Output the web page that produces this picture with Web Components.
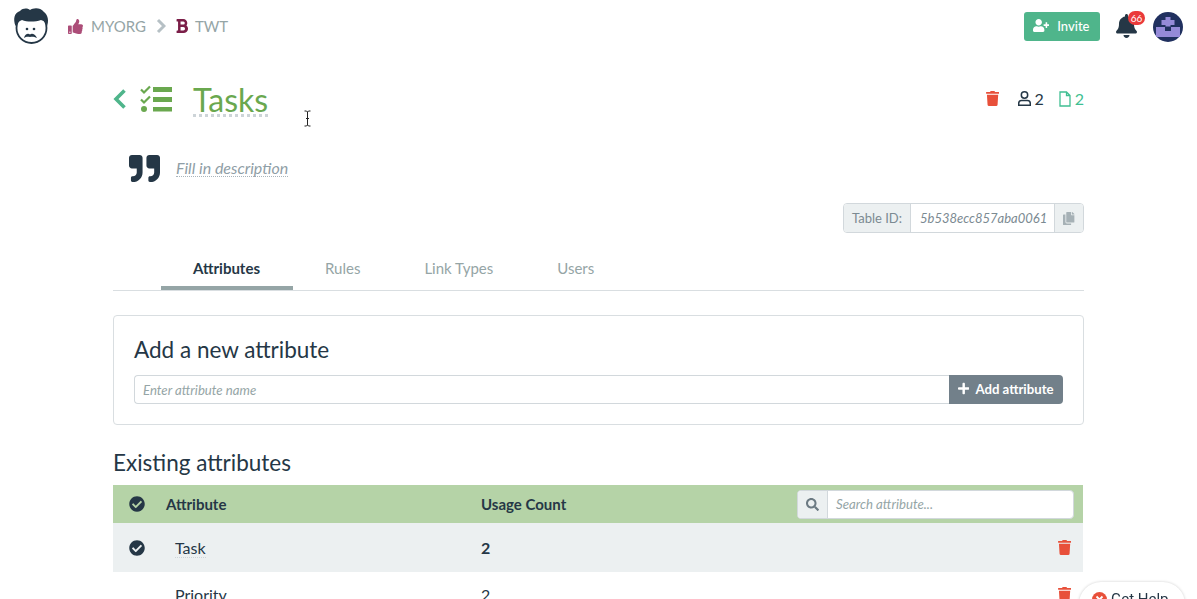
<!DOCTYPE html>
<html>
<head>
<meta charset="utf-8">
<title>Tasks</title>
<style>
    html, body {
        margin: 0;
        height: 599px;
        overflow: hidden;
        background: #fff;
        font-family: Lato, "Liberation Sans", sans-serif;
        color: #253746;
    }
</style>
</head>
<body>
<app-topbar></app-topbar>
<table-page></table-page>
<help-bubble></help-bubble>
<text-cursor></text-cursor>

<script>
const ICONS = {
    trash: ['0 0 448 512', 'M432 32H312l-9.4-18.7A24 24 0 0 0 281.1 0H166.8a23.72 23.72 0 0 0-21.4 13.3L136 32H16A16 16 0 0 0 0 48v32a16 16 0 0 0 16 16h416a16 16 0 0 0 16-16V48a16 16 0 0 0-16-16zM53.2 467a48 48 0 0 0 47.9 45h245.8a48 48 0 0 0 47.9-45L416 128H32z'],
    check: ['0 0 512 512', 'M504 256c0 136.967-111.033 248-248 248S8 392.967 8 256 119.033 8 256 8s248 111.033 248 248zM227.314 387.314l184-184c6.248-6.248 6.248-16.379 0-22.627l-22.627-22.627c-6.248-6.249-16.379-6.249-22.628 0L216 308.118l-70.059-70.059c-6.248-6.248-16.379-6.248-22.628 0l-22.627 22.627c-6.248 6.248-6.248 16.379 0 22.627l104 104c6.249 6.249 16.379 6.249 22.628.001z'],
    search: ['0 0 512 512', 'M505 442.7L405.3 343c-4.5-4.5-10.6-7-17-7H372c27.6-35.3 44-79.7 44-128C416 93.1 322.9 0 208 0S0 93.1 0 208s93.1 208 208 208c48.3 0 92.7-16.4 128-44v16.3c0 6.4 2.5 12.5 7 17l99.7 99.7c9.4 9.4 24.6 9.4 33.9 0l28.3-28.3c9.4-9.4 9.4-24.6.1-34zM208 336c-70.7 0-128-57.2-128-128 0-70.7 57.2-128 128-128 70.7 0 128 57.2 128 128 0 70.7-57.2 128-128 128z'],
    bell: ['0 0 448 512', 'M224 512c35.32 0 63.97-28.65 63.97-64H160.03c0 35.35 28.65 64 63.97 64zm215.39-149.71c-19.32-20.76-55.47-51.99-55.47-154.29 0-77.7-54.48-139.9-127.94-155.16V32c0-17.67-14.32-32-31.98-32s-31.98 14.33-31.98 32v20.84C118.56 68.1 64.08 130.3 64.08 208c0 102.3-36.15 133.53-55.47 154.29-6 6.45-8.66 14.16-8.61 21.71.11 16.4 12.98 32 32.1 32h383.8c19.12 0 32-15.6 32.1-32 .05-7.55-2.61-15.27-8.61-21.71z'],
    quote: ['0 0 512 512', 'M464 32H336c-26.5 0-48 21.5-48 48v128c0 26.5 21.5 48 48 48h80v64c0 35.3-28.7 64-64 64h-8c-13.3 0-24 10.7-24 24v48c0 13.3 10.7 24 24 24h8c88.4 0 160-71.6 160-160V80c0-26.5-21.5-48-48-48zm-288 0H48C21.5 32 0 53.5 0 80v128c0 26.5 21.5 48 48 48h80v64c0 35.3-28.7 64-64 64h-8c-13.3 0-24 10.7-24 24v48c0 13.3 10.7 24 24 24h8c88.4 0 160-71.6 160-160V80c0-26.5-21.5-48-48-48z'],
    thumb: ['0 0 512 512', 'M104 224H24c-13.255 0-24 10.745-24 24v240c0 13.255 10.745 24 24 24h80c13.255 0 24-10.745 24-24V248c0-13.255-10.745-24-24-24zM64 472c-13.255 0-24-10.745-24-24s10.745-24 24-24 24 10.745 24 24-10.745 24-24 24zM384 81.452c0 42.416-25.97 66.208-33.277 94.548h101.723c33.397 0 59.397 27.746 59.553 58.098.084 17.938-7.546 37.249-19.439 49.197l-.11.11c9.836 23.337 8.237 56.037-9.308 79.469 8.681 25.895-.069 57.704-16.382 74.757 4.298 17.598 2.244 32.575-6.148 44.632C440.202 511.587 389.616 512 346.839 512l-2.845-.001c-48.287-.017-87.806-17.598-119.56-31.725-15.957-7.099-36.821-15.887-52.651-16.178-6.54-.12-11.783-5.457-11.783-11.998v-213.77c0-3.2 1.282-6.271 3.558-8.521 39.614-39.144 56.648-80.587 89.117-113.111 14.804-14.832 20.188-37.236 25.393-58.902C282.515 39.293 291.817 0 312 0c24 0 72 8 72 81.452z'],
    plus: ['0 0 448 512', 'M416 208H272V64c0-17.67-14.33-32-32-32h-32c-17.67 0-32 14.33-32 32v144H32c-17.67 0-32 14.33-32 32v32c0 17.67 14.33 32 32 32h144v144c0 17.67 14.33 32 32 32h32c17.67 0 32-14.33 32-32V304h144c17.67 0 32-14.33 32-32v-32c0-17.67-14.33-32-32-32z'],
    userplus: ['0 0 640 512', 'M624 208h-64v-64c0-8.8-7.2-16-16-16h-32c-8.8 0-16 7.2-16 16v64h-64c-8.8 0-16 7.2-16 16v32c0 8.8 7.2 16 16 16h64v64c0 8.8 7.2 16 16 16h32c8.8 0 16-7.2 16-16v-64h64c8.8 0 16-7.2 16-16v-32c0-8.8-7.2-16-16-16zm-400 48c70.7 0 128-57.3 128-128S294.7 0 224 0 96 57.3 96 128s57.3 128 128 128zm89.6 32h-16.7c-22.2 10.2-46.9 16-72.9 16s-50.6-5.8-72.9-16h-16.7C60.2 288 0 348.2 0 422.4V464c0 26.5 21.5 48 48 48h352c26.5 0 48-21.5 48-48v-41.6c0-74.2-60.2-134.4-134.4-134.4z'],
    copy: ['0 0 448 512', 'M320 448v40c0 13.255-10.745 24-24 24H24c-13.255 0-24-10.745-24-24V120c0-13.255 10.745-24 24-24h72v296c0 30.879 25.121 56 56 56h168zm0-344V0H152c-13.255 0-24 10.745-24 24v368c0 13.255 10.745 24 24 24h272c13.255 0 24-10.745 24-24V128H344c-13.2 0-24-10.8-24-24zm120.971-31.029L375.029 7.029A24 24 0 0 0 358.059 0H352v96h96v-6.059a24 24 0 0 0-7.029-16.97z'],
    bold: ['0 0 384 512', 'M333.49 238a122 122 0 0 0 27-65.21C367.87 96.49 308 32 233.42 32H34a16 16 0 0 0-16 16v48a16 16 0 0 0 16 16h31.87v288H34a16 16 0 0 0-16 16v48a16 16 0 0 0 16 16h209.32c70.8 0 134.14-51.75 141-122.4 4.74-48.45-16.39-92.06-50.83-119.6zM145.66 112h87.76a48 48 0 0 1 0 96h-87.76zm87.76 288h-87.76V288h87.76a56 56 0 0 1 0 112z']
};

// small helper so every shadow root can use the same icon set
function icon(name, height, color) {
    const [box, d] = ICONS[name];
    const parts = box.split(' ');
    const width = height * parts[2] / parts[3];
    return `<svg viewBox="${box}" width="${width}" height="${height}" fill="${color}" style="display:block;flex:none"><path d="${d}"/></svg>`;
}

class AppTopbar extends HTMLElement {
    constructor() {
        super();
        this.attachShadow({mode: 'open'});
        this.shadowRoot.innerHTML = `
            <style>
                :host {
                    display: flex;
                    align-items: center;
                    height: 52px;
                    padding: 0 14px 0 13px;
                    box-sizing: border-box;
                }
                .crumbs {
                    display: flex;
                    align-items: center;
                    margin-left: 19px;
                    font-size: 15px;
                    color: #95a5a6;
                }
                .crumbs svg { margin-right: 8px; }
                .right {
                    margin-left: auto;
                    display: flex;
                    align-items: center;
                }
                .invite {
                    display: flex;
                    align-items: center;
                    gap: 8px;
                    height: 29px;
                    width: 76px;
                    box-sizing: border-box;
                    padding: 0 0 2px 9px;
                    margin-top: 1px;
                    background: #4fb58b;
                    color: #fff;
                    border-radius: 3px;
                    font-size: 13px;
                    font-weight: 500;
                }
                .bell {
                    position: relative;
                    margin: 0 16px;
                }
                .badge {
                    position: absolute;
                    top: -3px;
                    left: 12px;
                    width: 17px;
                    height: 14px;
                    border-radius: 7px;
                    background: #ea3a3a;
                    color: #fff;
                    font-size: 10px;
                    line-height: 14px;
                    text-align: center;
                }
            </style>
            <svg width="36" height="38" viewBox="0 0 36 38" style="flex:none">
                <circle cx="18.500" cy="21" r="15" fill="#fff" stroke="#253746" stroke-width="1.800"/>
                <path d="M2.500 19C0 12 1 6 7 4c3-3 7-3 10-1 3-2 10-3 14 2 4 3 5 9 3 14-1-4-3-5-6-6-6 2-14 2-19 0-3 1-5 3-6.500 6z" fill="#253746"/>
                <circle cx="14" cy="22" r="1.300" fill="#253746"/>
                <circle cx="21" cy="22" r="1.300" fill="#253746"/>
                <path d="M11 31c1-4 4-5 6-3.500 2-1.500 5-.5 7 3.500-3-1.500-5-1.500-7-1-2-.5-4-.5-6 1z" fill="#253746"/>
            </svg>
            <div class="crumbs">
                ${icon('thumb', 15, '#ac4d78')}
                <span>MYORG</span>
                <svg width="10" height="16" viewBox="0 0 10 16" style="margin:0 10px"><path d="M2 2l6 6-6 6" fill="none" stroke="#b6c0c5" stroke-width="3"/></svg>
                ${icon('bold', 16, '#7b1e48')}
                <span style="margin-left:-1px">TWT</span>
            </div>
            <div class="right">
                <div class="invite">${icon('userplus', 13, '#fff')}<span>Invite</span></div>
                <div class="bell">
                    ${icon('bell', 24, '#253746')}
                    <span class="badge">66</span>
                </div>
                <svg width="30" height="30" viewBox="0 0 30 30" style="margin-top:1px">
                    <circle cx="15" cy="15" r="15" fill="#20305f"/>
                    <path d="M3 15h9v4h6v-4h9v10H3z" fill="#958ad8"/>
                    <path d="M12.500 5h5v3h4v5h-4v1.500h-5V13h-4V8h4z" fill="#958ad8"/>
                </svg>
            </div>
        `;
    }
}

class TablePage extends HTMLElement {
    constructor() {
        super();
        this.attachShadow({mode: 'open'});
        this.shadowRoot.innerHTML = `
            <style>
                :host {
                    display: block;
                    width: 971px;
                    margin-left: 113px;
                }
                .head {
                    display: flex;
                    align-items: flex-start;
                    height: 80px;
                    padding-top: 24px;
                    box-sizing: border-box;
                }
                .head .tasks { margin: 9px 21px 0 13px; flex: none; }
                h1 {
                    margin: 4px 0 0;
                    font-size: 32px;
                    line-height: 40px;
                    font-weight: 400;
                    color: #6aa84f;
                    border-bottom: 3px dotted #cdd4d8;
                    height: 34px;
                }
                .stats {
                    margin-left: auto;
                    display: flex;
                    align-items: center;
                    font-size: 16px;
                    margin-top: 13px;
                }
                .stats span { margin-left: 4px; }
                .stats .people { margin-left: 3px; color: #253746; }
                .desc {
                    display: flex;
                    align-items: center;
                    height: 40px;
                    padding-left: 16px;
                    margin-top: 16px;
                    font-style: italic;
                    font-size: 16px;
                    color: #8f9ea6;
                }
                .desc b {
                    font-weight: 400;
                    margin-left: 16px;
                    border-bottom: 1px dotted #aab5bb;
                    line-height: 17px;
                }
                .idrow {
                    display: flex;
                    justify-content: flex-end;
                    margin-top: 15px;
                }
                .idgroup {
                    display: flex;
                    height: 30px;
                    box-sizing: border-box;
                    border: 1px solid #d2d8dc;
                    border-radius: 4px;
                    font-size: 13px;
                    line-height: 28px;
                    overflow: hidden;
                }
                .idgroup .lab { background: #ecf0f1; color: #7b8a92; padding: 0 8px; border-right: 1px solid #d2d8dc; }
                .idgroup .val { font-style: italic; color: #7b8a92; padding-left: 9px; width: 143px; box-sizing: border-box; white-space: nowrap; }
                .idgroup .cp { background: #ecf0f1; border-left: 1px solid #d2d8dc; display: flex; align-items: center; justify-content: center; width: 28px; }
                nav {
                    display: flex;
                    margin-top: 19px;
                    height: 38px;
                    padding-left: 48px;
                    border-bottom: 1px solid #d9dee1;
                    font-size: 15px;
                    color: #95a5a6;
                }
                nav a { padding: 7px 32px 0; height: 31px; }
                nav a.active { color: #253746; font-weight: 700; border-bottom: 4px solid #95a5a6; height: 27px; padding-right: 33px; }
                .add {
                    margin-top: 24px;
                    height: 110px;
                    box-sizing: border-box;
                    border: 1px solid #d9dee1;
                    border-radius: 4px;
                    padding: 20px;
                }
                h2 {
                    margin: 0;
                    font-size: 22.500px;
                    line-height: 28px;
                    font-weight: 400;
                    color: #253746;
                }
                .addrow { display: flex; height: 29px; margin-top: 11px; }
                .addrow .inp {
                    flex: 1;
                    border: 1px solid #d2d8dc;
                    border-right: 0;
                    border-radius: 4px 0 0 4px;
                    font-size: 13.200px;
                    font-style: italic;
                    color: #95a5a6;
                    line-height: 29px;
                    padding-left: 8px;
                }
                .addrow .btn {
                    width: 114px;
                    background: #72808a;
                    border-radius: 0 4px 4px 0;
                    color: #fff;
                    display: flex;
                    align-items: center;
                    gap: 6px;
                    padding: 0 0 2px 9px;
                    box-sizing: border-box;
                    font-size: 13.200px;
                    font-weight: 700;
                }
                .existing { margin-top: 24px; }
            </style>
            <div class="head">
                <svg width="14" height="22" viewBox="0 0 14 22" style="margin-top:12px;flex:none"><path d="M11.500 2.500L3 11l8.500 8.500" fill="none" stroke="#4fb58b" stroke-width="3.600"/></svg>
                <svg class="tasks" width="32" height="27" viewBox="0 0 32 27">
                    <path d="M1 4.500l3 3 6-6M1 14.500l3 3 6-6" fill="none" stroke="#6aa84f" stroke-width="2.200"/>
                    <circle cx="4" cy="24" r="3" fill="#6aa84f"/>
                    <path d="M13 2h19v5H13zM13 12h19v5H13zM13 22h19v4.500H13z" fill="#6aa84f"/>
                </svg>
                <h1>Tasks</h1>
                <div class="stats">
                    ${icon('trash', 15, '#e8503a')}
                    <svg width="13" height="15" viewBox="0 0 13 15" fill="none" stroke="#253746" stroke-width="1.500" style="margin-left:19px"><circle cx="6.500" cy="4" r="3.200"/><path d="M.7 14.300v-1.800c0-1.800 1.300-3 2.800-3h6c1.500 0 2.800 1.200 2.800 3v1.800z"/></svg>
                    <span class="people">2</span>
                    <svg width="12" height="16" viewBox="0 0 12 16" fill="none" stroke="#3fbf92" stroke-width="1.300" style="margin-left:15px"><path d="M1 1h6.500L11 4.500V15H1zM7.500 1v3.500H11"/></svg>
                    <span style="color:#3fbf92">2</span>
                </div>
            </div>
            <div class="desc">${icon('quote', 31, '#253746')}<b>Fill in description</b></div>
            <div class="idrow">
                <div class="idgroup">
                    <div class="lab">Table ID:</div>
                    <div class="val">5b538ecc857aba0061</div>
                    <div class="cp">${icon('copy', 13, '#a6b1b6')}</div>
                </div>
            </div>
            <nav>
                <a class="active">Attributes</a>
                <a>Rules</a>
                <a>Link Types</a>
                <a>Users</a>
            </nav>
            <section class="add">
                <h2>Add a new attribute</h2>
                <div class="addrow">
                    <div class="inp">Enter attribute name</div>
                    <div class="btn">${icon('plus', 13, '#fff')}<span>Add attribute</span></div>
                </div>
            </section>
            <h2 class="existing">Existing attributes</h2>
            <attr-table></attr-table>
        `;
    }
}

class AttrTable extends HTMLElement {
    constructor() {
        super();
        this.attachShadow({mode: 'open'});
        this.shadowRoot.innerHTML = `
            <style>
                :host {
                    display: block;
                    margin: 8px 1px 0 0;
                    font-size: 16px;
                    color: #253746;
                }
                .row {
                    display: grid;
                    grid-template-columns: 53px 315px 1fr auto;
                    align-items: center;
                }
                .row > svg { justify-self: start; margin-left: 16px; }
                .hdr { height: 38px; background: #b5d3a7; font-weight: 700; font-size: 15px; }
                .sel { height: 49px; background: #ecf0f1; }
                .plain { height: 44px; }
                .name { padding-left: 9px; }
                .name span { border-bottom: 1px dotted #cdd4d8; }
                .trash { margin-right: 12px; }
                .search {
                    display: flex;
                    width: 277px;
                    height: 29px;
                    box-sizing: border-box;
                    margin-right: 9px;
                    background: #fff;
                    border: 1px solid #d2d8dc;
                    border-radius: 4px;
                    overflow: hidden;
                    font-size: 13.200px;
                    font-weight: 400;
                    font-style: italic;
                    color: #95a5a6;
                    line-height: 27px;
                }
                .search .ic { width: 29px; background: #ecf0f1; border-right: 1px solid #d2d8dc; display: flex; align-items: center; justify-content: center; flex: none; }
                .search .tx { padding-left: 8px; }
            </style>
            <div class="row hdr">
                ${icon('check', 16, '#253746')}
                <div>Attribute</div>
                <div>Usage Count</div>
                <div class="search"><div class="ic">${icon('search', 13, '#6c7a83')}</div><div class="tx">Search attribute...</div></div>
            </div>
            <div class="row sel">
                ${icon('check', 16, '#253746')}
                <div class="name"><span>Task</span></div>
                <div style="font-weight:700">2</div>
                <div class="trash">${icon('trash', 15, '#e8503a')}</div>
            </div>
            <div class="row plain">
                <i></i>
                <div class="name"><span>Priority</span></div>
                <div>2</div>
                <div class="trash">${icon('trash', 15, '#e8503a')}</div>
            </div>
        `;
    }
}

class HelpBubble extends HTMLElement {
    constructor() {
        super();
        this.attachShadow({mode: 'open'});
        this.shadowRoot.innerHTML = `
            <style>
                :host {
                    position: fixed;
                    left: 1079px;
                    top: 582px;
                    width: 106px;
                    height: 44px;
                    box-sizing: border-box;
                    display: flex;
                    align-items: center;
                    gap: 4px;
                    padding: 0 0 10px 13px;
                    background: #fff;
                    border-radius: 22px;
                    box-shadow: 0 0 3px rgba(0, 0, 0, .2);
                    font: 15px Roboto, sans-serif;
                    color: #253746;
                }
            </style>
            <svg width="15" height="15" viewBox="0 0 15 15"><circle cx="7.500" cy="7.500" r="7.500" fill="#e8503a"/><path d="M4.500 4.500l6 6M10.500 4.500l-6 6" stroke="#fff" stroke-width="1.800"/></svg>
            <span>Get Help</span>
        `;
    }
}

class TextCursor extends HTMLElement {
    constructor() {
        super();
        this.attachShadow({mode: 'open'});
        this.shadowRoot.innerHTML = `
            <style>:host { position: fixed; left: 303px; top: 110px; }</style>
            <svg width="9" height="17" viewBox="0 0 9 17" style="display:block"><path d="M1.500 1h2l1 1 1-1h2M1.500 16h2l1-1 1 1h2M4.500 2v13M3 8.500h3" fill="none" stroke="#222" stroke-width="1"/></svg>
        `;
    }
}

customElements.define('app-topbar', AppTopbar);
customElements.define('table-page', TablePage);
customElements.define('attr-table', AttrTable);
customElements.define('help-bubble', HelpBubble);
customElements.define('text-cursor', TextCursor);
</script>
</body>
</html>
